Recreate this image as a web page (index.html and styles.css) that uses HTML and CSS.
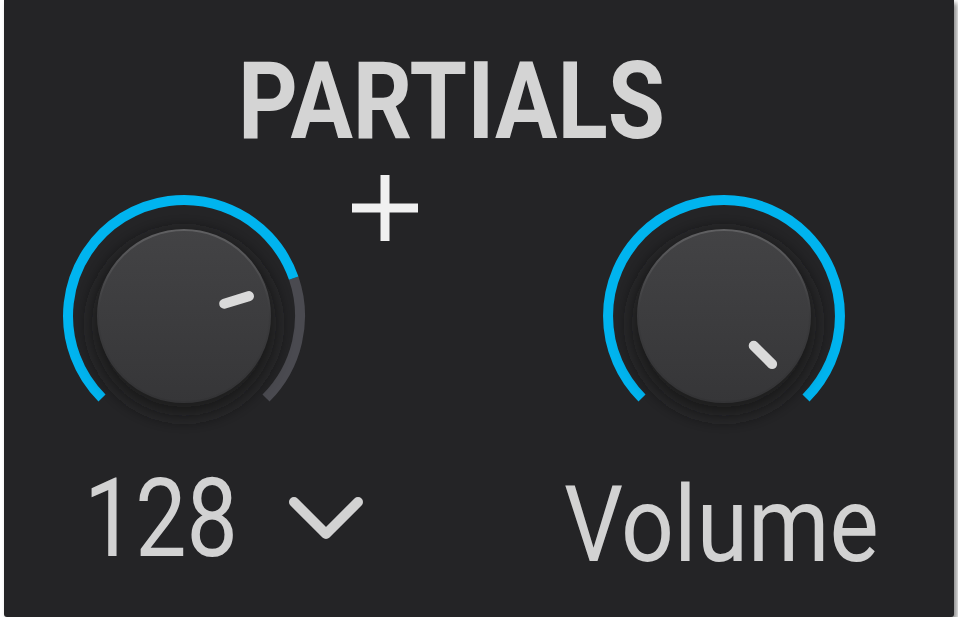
FILE: index.html
```html
<!DOCTYPE html>
<html lang="en">
<head>
    <meta charset="UTF-8">
    <title>Partials</title>
    <link rel="stylesheet" href="styles.css">
</head>
<body>
    <div class="panel">
        <h1 class="title"><span>PARTIALS</span></h1>

        <div class="knob-row">
            <!-- Partials knob -->
            <svg class="knob" viewBox="0 0 250 250" width="250" height="250">
                <defs>
                    <linearGradient id="bodyA" x1="0" y1="0" x2="0" y2="1">
                        <stop offset="0" stop-color="#434345"/>
                        <stop offset="1" stop-color="#363638"/>
                    </linearGradient>
                    <linearGradient id="rimA" x1="0" y1="0" x2="0" y2="1">
                        <stop offset="0" stop-color="#606062"/>
                        <stop offset="0.5" stop-color="#3a3a3c"/>
                        <stop offset="1" stop-color="#333335"/>
                    </linearGradient>
                    <filter id="haloA" x="-30%" y="-30%" width="160%" height="160%">
                        <feGaussianBlur stdDeviation="9"/>
                    </filter>
                </defs>
                <path class="track" d="M 234.7 87.2 A 116 116 0 0 1 207.0 207.0"/>
                <path class="value" d="M 43.0 207.0 A 116 116 0 1 1 234.7 87.2"/>
                <circle cx="125" cy="133" r="92" fill="#1a1a1c" filter="url(#haloA)"/>
                <circle cx="125" cy="125" r="86" fill="url(#bodyA)" stroke="url(#rimA)" stroke-width="2"/>
                <line class="pointer" x1="165.2" y1="112.7" x2="190.0" y2="105.1"/>
            </svg>

            <svg class="plus" viewBox="0 0 66 66" width="66" height="66">
                <rect x="0" y="28.5" width="66" height="9" fill="#f0f0f0"/>
                <rect x="28.5" y="0" width="9" height="66" fill="#f0f0f0"/>
            </svg>

            <!-- Volume knob -->
            <svg class="knob" viewBox="0 0 250 250" width="250" height="250">
                <defs>
                    <linearGradient id="bodyB" x1="0" y1="0" x2="0" y2="1">
                        <stop offset="0" stop-color="#434345"/>
                        <stop offset="1" stop-color="#363638"/>
                    </linearGradient>
                    <linearGradient id="rimB" x1="0" y1="0" x2="0" y2="1">
                        <stop offset="0" stop-color="#606062"/>
                        <stop offset="0.5" stop-color="#3a3a3c"/>
                        <stop offset="1" stop-color="#333335"/>
                    </linearGradient>
                    <filter id="haloB" x="-30%" y="-30%" width="160%" height="160%">
                        <feGaussianBlur stdDeviation="9"/>
                    </filter>
                </defs>
                <path class="value" d="M 43.0 207.0 A 116 116 0 1 1 207.0 207.0"/>
                <circle cx="125" cy="133" r="92" fill="#1a1a1c" filter="url(#haloB)"/>
                <circle cx="125" cy="125" r="86" fill="url(#bodyB)" stroke="url(#rimB)" stroke-width="2"/>
                <line class="pointer" x1="154.7" y1="154.7" x2="173.1" y2="173.1"/>
            </svg>
        </div>

        <div class="label-row">
            <div class="select">
                <span class="label label-num">128</span>
                <svg class="chevron" viewBox="0 0 76 48" width="76" height="48">
                    <polyline points="6,6 38,38 70,6"/>
                </svg>
            </div>
            <span class="label label-volume">Volume</span>
        </div>
    </div>
</body>
</html>
```

FILE: styles.css
```css
* {
    margin: 0;
    padding: 0;
    box-sizing: border-box;
}

body {
    background: #ffffff;
    font-family: Roboto, "Noto Sans", sans-serif;
}

.panel {
    width: 950px;
    height: 617px;
    margin-left: 4px;
    background: #242426;
    box-shadow: 3px 3px 5px rgba(0, 0, 0, 0.45);
    padding-top: 47px;
    border-radius: 0 0 3px 3px;
}

/* Title */
.title {
    font-size: 108px;
    font-weight: 700;
    line-height: 108px;
    color: #d4d4d4;
    padding-left: 234px;
    white-space: nowrap;
}

.title span {
    display: inline-block;
    transform: scaleX(0.86);
    transform-origin: left center;
}

/* Knobs */
.knob-row {
    display: flex;
    align-items: flex-start;
    margin-top: 36px;
    padding-left: 55px;
}

.knob {
    display: block;
    flex: none;
}

.knob .value,
.knob .track {
    fill: none;
    stroke-width: 10;
}

.knob .value {
    stroke: #00b4ef;
}

.knob .track {
    stroke: #4a4a50;
}

.knob .pointer {
    stroke: #dadada;
    stroke-width: 10;
    stroke-linecap: round;
}

.plus {
    display: block;
    flex: none;
    margin: -16px 181px 0 43px;
}

/* Labels */
.label-row {
    display: flex;
    align-items: flex-start;
    margin-top: 23px;
}

.select {
    display: flex;
    align-items: flex-start;
    padding-left: 80px;
    width: 480px;
}

.label {
    display: inline-block;
    color: #d2d2d2;
    font-weight: 400;
    white-space: nowrap;
    transform-origin: left top;
}

.label-num {
    font-size: 110px;
    line-height: 110px;
    width: 204px;
    transform: scaleX(0.83);
}

.chevron {
    display: block;
    flex: none;
    fill: none;
    stroke: #d2d2d2;
    stroke-width: 10;
    stroke-linecap: round;
    stroke-linejoin: round;
    margin: 32px 0 0 0;
}

.label-volume {
    font-size: 105px;
    line-height: 105px;
    margin-top: 9px;
    margin-left: 80px;
    transform: scaleX(0.885);
}
```
